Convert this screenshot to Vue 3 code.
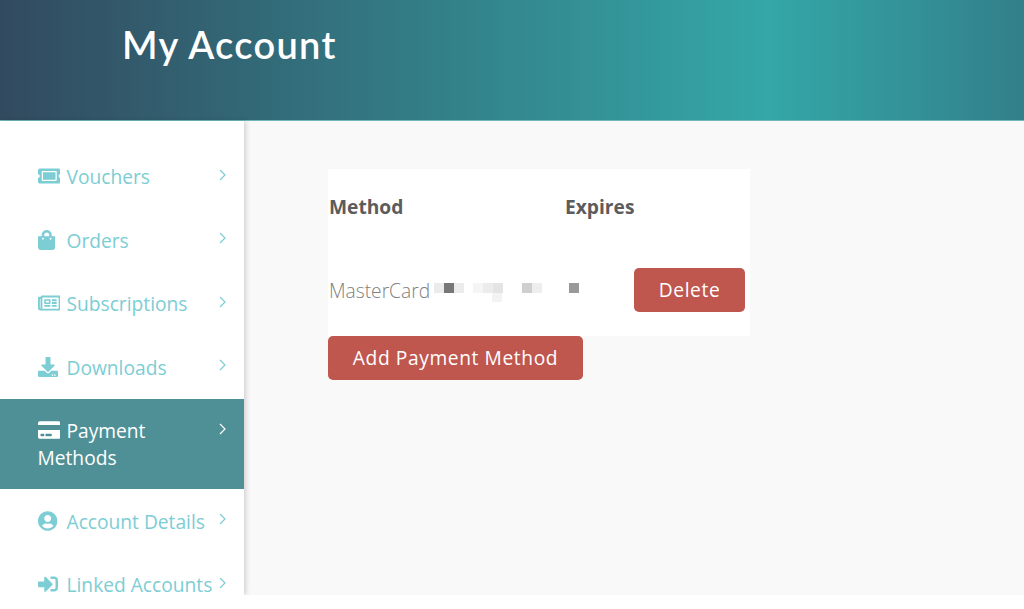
<script setup>
const menu = [
  { label: 'Vouchers', box: '0 0 576 512', d: 'M128 160h320v192H128V160zm400 96c0 26.51 21.49 48 48 48v96c0 26.51-21.49 48-48 48H48c-26.51 0-48-21.49-48-48v-96c26.51 0 48-21.49 48-48s-21.49-48-48-48v-96c0-26.51 21.49-48 48-48h480c26.51 0 48 21.49 48 48v96c-26.51 0-48 21.49-48 48zm-48-104c0-13.255-10.745-24-24-24H120c-13.255 0-24 10.745-24 24v208c0 13.255 10.745 24 24 24h336c13.255 0 24-10.745 24-24V152z' },
  { label: 'Orders', box: '0 0 448 512', d: 'M352 160v-32C352 57.42 294.579 0 224 0 153.42 0 96 57.42 96 128v32H0v272c0 44.183 35.817 80 80 80h288c44.183 0 80-35.817 80-80V160h-96zm-192-32c0-35.29 28.71-64 64-64s64 28.71 64 64v32H160v-32zm160 120c-13.255 0-24-10.745-24-24s10.745-24 24-24 24 10.745 24 24-10.745 24-24 24zm-192 0c-13.255 0-24-10.745-24-24s10.745-24 24-24 24 10.745 24 24-10.745 24-24 24z' },
  { label: 'Subscriptions', box: '0 0 576 512', d: 'M552 64H112c-20.858 0-38.643 13.377-45.248 32H24c-13.255 0-24 10.745-24 24v272c0 30.928 25.072 56 56 56h496c13.255 0 24-10.745 24-24V88c0-13.255-10.745-24-24-24zM48 392V144h16v248c0 4.411-3.589 8-8 8s-8-3.589-8-8zm480 8H111.422c.374-2.614.578-5.283.578-8V112h416v288zM172 280h136c6.627 0 12-5.373 12-12v-96c0-6.627-5.373-12-12-12H172c-6.627 0-12 5.373-12 12v96c0 6.627 5.373 12 12 12zm28-80h80v40h-80v-40zm-40 140v-24c0-6.627 5.373-12 12-12h136c6.627 0 12 5.373 12 12v24c0 6.627-5.373 12-12 12H172c-6.627 0-12-5.373-12-12zm192 0v-24c0-6.627 5.373-12 12-12h104c6.627 0 12 5.373 12 12v24c0 6.627-5.373 12-12 12H364c-6.627 0-12-5.373-12-12zm0-144v-24c0-6.627 5.373-12 12-12h104c6.627 0 12 5.373 12 12v24c0 6.627-5.373 12-12 12H364c-6.627 0-12-5.373-12-12zm0 72v-24c0-6.627 5.373-12 12-12h104c6.627 0 12 5.373 12 12v24c0 6.627-5.373 12-12 12H364c-6.627 0-12-5.373-12-12z' },
  { label: 'Downloads', box: '0 0 512 512', d: 'M216 0h80c13.3 0 24 10.7 24 24v168h87.7c17.8 0 26.7 21.5 14.1 34.1L269.7 378.3c-7.5 7.5-19.8 7.5-27.3 0L90.1 226.1c-12.6-12.6-3.7-34.1 14.1-34.1H192V24c0-13.3 10.7-24 24-24zm296 376v112c0 13.3-10.7 24-24 24H24c-13.3 0-24-10.7-24-24V376c0-13.3 10.7-24 24-24h146.7l49 49c20.1 20.1 52.5 20.1 72.6 0l49-49H488c13.3 0 24 10.7 24 24zm-124 88c0-11-9-20-20-20s-20 9-20 20 9 20 20 20 20-9 20-20zm64 0c0-11-9-20-20-20s-20 9-20 20 9 20 20 20 20-9 20-20z' },
  { label: 'Payment Methods', active: true, box: '0 0 576 512', d: 'M0 432c0 26.5 21.5 48 48 48h480c26.5 0 48-21.5 48-48V256H0v176zm192-68c0-6.6 5.4-12 12-12h136c6.6 0 12 5.4 12 12v40c0 6.6-5.4 12-12 12H204c-6.6 0-12-5.4-12-12v-40zm-128 0c0-6.6 5.4-12 12-12h72c6.6 0 12 5.4 12 12v40c0 6.6-5.4 12-12 12H76c-6.6 0-12-5.4-12-12v-40zM576 80v48H0V80c0-26.5 21.5-48 48-48h480c26.5 0 48 21.5 48 48z' },
  { label: 'Account Details', box: '0 0 496 512', d: 'M248 8C111 8 0 119 0 256s111 248 248 248 248-111 248-248S385 8 248 8zm0 96c48.6 0 88 39.4 88 88s-39.4 88-88 88-88-39.4-88-88 39.4-88 88-88zm0 344c-58.7 0-111.3-26.6-146.5-68.2 18.8-35.4 55.6-59.8 98.5-59.8 2.4 0 4.8.4 7.1 1.1 13 4.2 26.6 6.9 40.9 6.9 14.3 0 28-2.7 40.9-6.9 2.3-.7 4.7-1.1 7.1-1.1 42.9 0 79.7 24.4 98.5 59.8C359.3 421.4 306.7 448 248 448z' },
  { label: 'Linked Accounts', box: '0 0 512 512', d: 'M416 448h-84c-6.6 0-12-5.4-12-12v-40c0-6.6 5.4-12 12-12h84c17.7 0 32-14.3 32-32V160c0-17.7-14.3-32-32-32h-84c-6.6 0-12-5.4-12-12V76c0-6.6 5.4-12 12-12h84c53 0 96 43 96 96v192c0 53-43 96-96 96zm-47-201L201 79c-15-15-41-4.5-41 17v96H24c-13.3 0-24 10.7-24 24v96c0 13.3 10.7 24 24 24h136v96c0 21.5 26 32 41 17l168-168c9.3-9.4 9.3-24.6 0-34z' }
]

// redacted card number, left as the blurred blocks of the original
const cardBlocks = [
  ['#ebebeb', '#777777', '#ebebeb'],
  ['#f5f5f5', '#ececec', '#e4e4e4'],
  ['#cfcfcf', '#eeeeee']
]
</script>

<template>
  <div class="page">
    <header class="banner">
      <h1>My Account</h1>
    </header>

    <div class="body">
      <aside class="sidebar">
        <ul class="menu">
          <li v-for="item in menu" :key="item.label" class="menu-item" :class="{ active: item.active }">
            <span class="icon">
              <svg :viewBox="item.box" height="20" fill="currentColor"><path :d="item.d" /></svg>
            </span>{{ item.label }}
            <svg class="chevron" viewBox="0 0 7 12" width="7" height="12" fill="none" stroke="currentColor" stroke-width="1.2">
              <path d="M1 1l5 5-5 5" />
            </svg>
          </li>
        </ul>
      </aside>

      <main class="content">
        <table class="methods">
          <thead>
            <tr>
              <th class="col-method">Method</th>
              <th class="col-expires">Expires</th>
              <th></th>
            </tr>
          </thead>
          <tbody>
            <tr>
              <td>
                <div class="method-cell">
                  MasterCard
                  <span class="blur">
                    <span v-for="(group, i) in cardBlocks" :key="i" class="blur-group">
                      <i v-for="(shade, j) in group" :key="j" :style="{ background: shade }"></i>
                    </span>
                    <i class="blur-tail"></i>
                  </span>
                </div>
              </td>
              <td><span class="blur-expiry"></span></td>
              <td class="col-action"><button class="btn btn-delete">Delete</button></td>
            </tr>
          </tbody>
        </table>
        <button class="btn btn-add">Add Payment Method</button>
      </main>
    </div>
  </div>
</template>

<style scoped>
.page {
  height: 595px;
  display: flex;
  flex-direction: column;
  overflow: hidden;
  font-family: "Open Sans", sans-serif;
  box-shadow: 0 1px 2px rgba(0, 0, 0, 0.08);
}

.banner {
  height: 120px;
  flex-shrink: 0;
  padding-left: 122px;
  display: flex;
  align-items: center;
  background: linear-gradient(90deg, #324a5f 0%, #34a7a7 75%, #32808a 100%);
  border-bottom: 1px solid #6fb8b8;
  box-sizing: content-box;
}

.banner h1 {
  margin: 0 0 33px;
  font-family: Lato, sans-serif;
  font-size: 38px;
  font-weight: 600;
  letter-spacing: 1.3px;
  line-height: 46px;
  color: #fff;
}

.body {
  flex: 1;
  display: flex;
  min-height: 0;
  background: #f9f9f9;
}

.sidebar {
  width: 244px;
  flex-shrink: 0;
  background: #fff;
  box-shadow: 2px 0 5px rgba(0, 0, 0, 0.16);
  position: relative;
}

.menu {
  list-style: none;
  margin: 0;
  padding: 23.8px 0 0;
}

.menu-item {
  position: relative;
  padding: 18.25px 28px 18.25px 37.5px;
  font-size: 19.2px;
  line-height: 27px;
  color: #7ccdd4;
}

.menu-item.active {
  background: #4f9097;
  color: #fff;
}

.icon {
  display: inline-block;
  width: 29px;
  vertical-align: -2px;
}

.icon svg {
  display: block;
}

.chevron {
  position: absolute;
  top: 24px;
  right: 18px;
}

.content {
  flex: 1;
  padding: 48px 0 0 84px;
}

.methods {
  width: 422px;
  table-layout: fixed;
  border-collapse: collapse;
  background: #fff;
  color: #5c5c5c;
  font-size: 19.2px;
}

.col-method {
  width: 236px;
}

.col-expires {
  width: 70px;
}

th {
  height: 76px;
  box-sizing: border-box;
  padding: 0 0 2px 1px;
  text-align: left;
  font-weight: 700;
}

td {
  height: 91px;
  padding: 0 0 0 1px;
  font-weight: 300;
  font-size: 19.2px;
  color: #808080;
}

.method-cell {
  display: flex;
  align-items: center;
}

.blur {
  position: relative;
  display: flex;
  gap: 9px;
  margin: -6px 0 0 4px;
}

.blur-group {
  display: flex;
}

.blur-group:last-of-type {
  margin-left: 10px;
}

.blur-group i {
  width: 10px;
  height: 10px;
}

.blur-tail {
  position: absolute;
  left: 58px;
  top: 10px;
  width: 10px;
  height: 9px;
  background: #f3f3f3;
}

.blur-expiry {
  display: block;
  width: 10px;
  height: 10px;
  margin: -6px 0 0 4px;
  background: #999;
}

.col-action {
  padding-left: 0;
}

.btn {
  display: block;
  height: 44px;
  border: 0;
  border-radius: 5px;
  background: #bf574f;
  color: #fff;
  font-family: "Open Sans", sans-serif;
  font-size: 19.2px;
  letter-spacing: 0.6px;
  padding: 0;
}

.btn-delete {
  width: 111px;
  margin-top: -2px;
}

.btn-add {
  width: 255px;
  padding-bottom: 2px;
}
</style>

<style>
html,
body {
  background: #fff;
}
</style>
